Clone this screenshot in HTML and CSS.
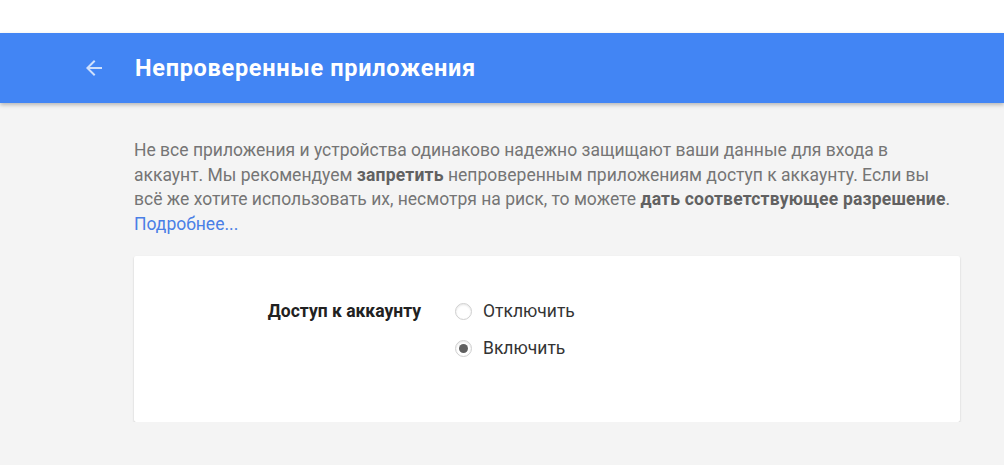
FILE: index.html
```html
<!DOCTYPE html>
<html lang="ru">
<head>
    <meta charset="UTF-8">
    <meta name="viewport" content="width=device-width, initial-scale=1.0">
    <title>Непроверенные приложения</title>
    <link rel="stylesheet" href="styles.css">
</head>

<body>
    <div class="topSpace"></div>
    <div class="header">
        <a class="back" href="#">
            <svg width="24" height="24" viewBox="0 0 24 24">
                <path d="M20 11H7.83l5.59-5.59L12 4l-8 8 8 8 1.41-1.41L7.83 13H20v-2z" fill="#cfe0fc"/>
            </svg>
        </a>
        <h1 class="title">Непроверенные приложения</h1>
    </div>

    <div class="content">
        <p class="intro">
            Не все приложения и устройства одинаково надежно защищают ваши данные для входа в<br>
            аккаунт. Мы рекомендуем <b>запретить</b> непроверенным приложениям доступ к аккаунту. Если вы<br>
            всё же хотите использовать их, несмотря на риск, то можете <b>дать соответствующее разрешение</b>.<br>
            <a href="#">Подробнее...</a>
        </p>

        <div class="card">
            <div class="label">Доступ к аккаунту</div>
            <div class="options">
                <label class="option">
                    <span class="radio"></span>
                    Отключить
                </label>
                <label class="option">
                    <span class="radio checked"></span>
                    Включить
                </label>
            </div>
        </div>
    </div>
</body>

</html>
```

FILE: styles.css
```css
* {
    margin: 0;
    padding: 0;
    box-sizing: border-box;
}

body {
    background-color: #f4f4f4;
    font-family: Roboto, "Liberation Sans", sans-serif;
    color: #757575;
}

.topSpace {
    height: 33px;
    background-color: #fff;
}

.header {
    height: 70px;
    background-color: #4285f4;
    display: flex;
    align-items: center;
    box-shadow: 0 2px 4px rgba(0, 0, 0, .25);
    position: relative;
}

.back {
    display: flex;
    margin-left: 82px;
    width: 24px;
    height: 24px;
}

.title {
    margin-left: 29px;
    color: #fff;
    font-size: 23.5px;
    font-weight: 700;
    letter-spacing: .7px;
}

.content {
    width: 826px;
    margin-left: 134px;
    padding-top: 35px;
}

/* текст с описанием */
.intro {
    font-size: 17.5px;
    line-height: 24.5px;
    white-space: nowrap;
}

.intro b {
    color: #616161;
    font-weight: 700;
    letter-spacing: .2px;
}

.intro a {
    color: #4a7fe6;
    text-decoration: none;
}

.card {
    margin-top: 20px;
    background-color: #fff;
    border-radius: 2px;
    box-shadow: 0 1px 2px rgba(0, 0, 0, .2);
    display: flex;
    padding: 43px 0 62px;
}

.label {
    width: 287px;
    text-align: right;
    font-size: 17.5px;
    font-weight: 700;
    color: #212121;
    line-height: 24px;
}

.options {
    margin-left: 34px;
    display: flex;
    flex-direction: column;
    gap: 13px;
}

.option {
    display: flex;
    align-items: center;
    gap: 11px;
    font-size: 17.5px;
    color: #333;
    line-height: 24px;
}

.radio {
    width: 17px;
    height: 17px;
    border-radius: 50%;
    border: 1px solid #cfcfcf;
    box-shadow: inset 0 1px 2px rgba(0, 0, 0, .1);
    display: flex;
    align-items: center;
    justify-content: center;
}

.radio.checked::after {
    content: "";
    width: 9px;
    height: 9px;
    border-radius: 50%;
    background-color: #5f5f5f;
}
```
